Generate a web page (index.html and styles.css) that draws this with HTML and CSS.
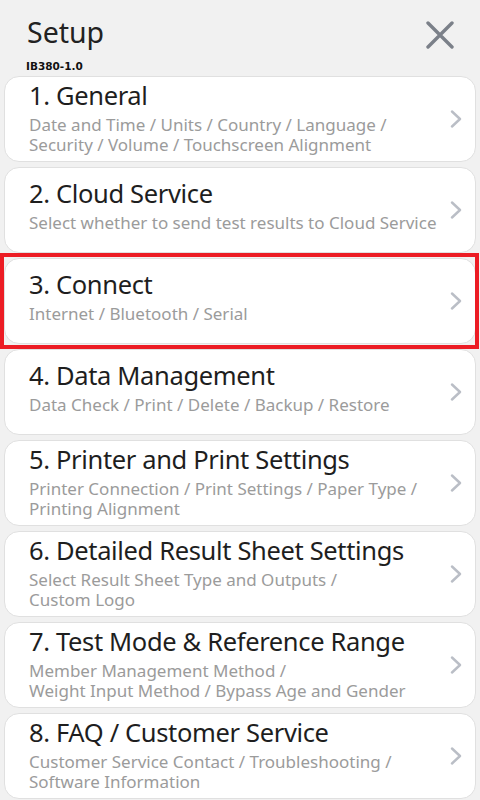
FILE: index.html
```html
<!DOCTYPE html>
<html lang="en">
<head>
<meta charset="utf-8">
<title>Setup</title>
<link rel="stylesheet" href="styles.css">
</head>
<body>
<div class="screen">
  <header class="header">
    <div class="heading">
      <h1 class="title">Setup</h1>
      <div class="version">IB380-1.0</div>
    </div>
    <button class="close" aria-label="Close">
      <svg width="28" height="28" viewBox="0 0 28 28"><path d="M2 2 L26 26 M26 2 L2 26" stroke="#7b8089" stroke-width="3.4" stroke-linecap="round" fill="none"/></svg>
    </button>
  </header>
  <ul class="menu">
    <li class="card two">
      <div class="text"><div class="name">1. General</div><div class="desc">Date and Time / Units / Country / Language /<br>Security / Volume / Touchscreen Alignment</div></div>
      <svg class="chev" width="12" height="18" viewBox="0 0 12 18"><polyline points="2,1.5 10,9 2,16.5" fill="none" stroke="#babec6" stroke-width="2.4" stroke-linecap="round" stroke-linejoin="round"/></svg>
    </li>
    <li class="card one">
      <div class="text"><div class="name">2. Cloud Service</div><div class="desc">Select whether to send test results to Cloud Service</div></div>
      <svg class="chev" width="12" height="18" viewBox="0 0 12 18"><polyline points="2,1.5 10,9 2,16.5" fill="none" stroke="#babec6" stroke-width="2.4" stroke-linecap="round" stroke-linejoin="round"/></svg>
    </li>
    <li class="card one highlighted">
      <div class="text"><div class="name">3. Connect</div><div class="desc">Internet / Bluetooth / Serial</div></div>
      <svg class="chev" width="12" height="18" viewBox="0 0 12 18"><polyline points="2,1.5 10,9 2,16.5" fill="none" stroke="#babec6" stroke-width="2.4" stroke-linecap="round" stroke-linejoin="round"/></svg>
    </li>
    <li class="card one">
      <div class="text"><div class="name">4. Data Management</div><div class="desc">Data Check / Print / Delete / Backup / Restore</div></div>
      <svg class="chev" width="12" height="18" viewBox="0 0 12 18"><polyline points="2,1.5 10,9 2,16.5" fill="none" stroke="#babec6" stroke-width="2.4" stroke-linecap="round" stroke-linejoin="round"/></svg>
    </li>
    <li class="card two">
      <div class="text"><div class="name">5. Printer and Print Settings</div><div class="desc">Printer Connection / Print Settings / Paper Type /<br>Printing Alignment</div></div>
      <svg class="chev" width="12" height="18" viewBox="0 0 12 18"><polyline points="2,1.5 10,9 2,16.5" fill="none" stroke="#babec6" stroke-width="2.4" stroke-linecap="round" stroke-linejoin="round"/></svg>
    </li>
    <li class="card two">
      <div class="text"><div class="name">6. Detailed Result Sheet Settings</div><div class="desc">Select Result Sheet Type and Outputs /<br>Custom Logo</div></div>
      <svg class="chev" width="12" height="18" viewBox="0 0 12 18"><polyline points="2,1.5 10,9 2,16.5" fill="none" stroke="#babec6" stroke-width="2.4" stroke-linecap="round" stroke-linejoin="round"/></svg>
    </li>
    <li class="card two">
      <div class="text"><div class="name">7. Test Mode &amp; Reference Range</div><div class="desc">Member Management Method /<br>Weight Input Method / Bypass Age and Gender</div></div>
      <svg class="chev" width="12" height="18" viewBox="0 0 12 18"><polyline points="2,1.5 10,9 2,16.5" fill="none" stroke="#babec6" stroke-width="2.4" stroke-linecap="round" stroke-linejoin="round"/></svg>
    </li>
    <li class="card two">
      <div class="text"><div class="name">8. FAQ / Customer Service</div><div class="desc">Customer Service Contact / Troubleshooting /<br>Software Information</div></div>
      <svg class="chev" width="12" height="18" viewBox="0 0 12 18"><polyline points="2,1.5 10,9 2,16.5" fill="none" stroke="#babec6" stroke-width="2.4" stroke-linecap="round" stroke-linejoin="round"/></svg>
    </li>
  </ul>
</div>
</body>
</html>
```
FILE: styles.css
```css
* { box-sizing: border-box; }
html, body { margin: 0; padding: 0; }
body {
  background: #f1f1f1;
  font-family: "Noto Sans", "Open Sans", sans-serif;
  width: 480px;
  height: 800px;
  overflow: hidden;
}
.screen { padding-top: 15px; }
.header {
  display: flex;
  justify-content: space-between;
  align-items: flex-start;
  padding: 0 26px 0 26px;
}
.title {
  margin: 0 0 0 1px;
  font-size: 28.5px;
  font-weight: 400;
  line-height: 34px;
  color: #222;
}
.version {
  margin-top: 11px;
  font-family: "DejaVu Sans", sans-serif;
  font-weight: 700;
  font-size: 10.5px;
  line-height: 12px;
  color: #111;
}
.close {
  margin-top: 6px;
  padding: 0;
  border: 0;
  background: none;
  width: 28px;
  height: 28px;
  display: block;
}
.close svg { display: block; }
.menu {
  list-style: none;
  margin: 4px 4px 0 4px;
  padding: 0;
  display: flex;
  flex-direction: column;
  gap: 5px;
}
.card {
  position: relative;
  height: 86px;
  background: #fff;
  border: 1px solid #e0e0e0;
  border-radius: 15px;
  display: flex;
  align-items: center;
  padding: 0 13px 0 24px;
}
.text {
  flex: 1;
  align-self: stretch;
  display: flex;
  flex-direction: column;
}
.card.two .text { padding-top: 3px; }
.card.one .text { padding-top: 10px; }
.name {
  font-size: 25.5px;
  line-height: 30px;
  color: #1e1e1e;
  letter-spacing: -0.35px;
}
.desc {
  margin-top: 5px;
  font-size: 17px;
  line-height: 20px;
  color: #9b9b9b;
}
.chev { flex: none; display: block; }
.highlighted::after {
  content: "";
  position: absolute;
  top: -6px;
  bottom: -6px;
  left: -5px;
  right: -4px;
  border: 4.5px solid #ec1c24;
  pointer-events: none;
}
```
